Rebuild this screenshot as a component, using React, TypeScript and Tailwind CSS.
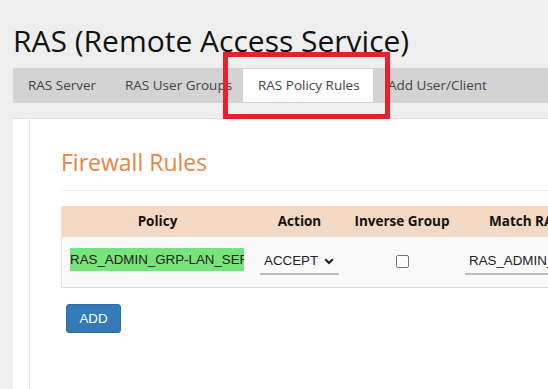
import React from "react";

const ui = { fontFamily: '"Open Sans", "Noto Sans", sans-serif' };
const inp = { fontFamily: '"Liberation Sans", Arial, sans-serif' };

export default function App() {
  return (
    <div className="relative w-[548px] h-[389px] overflow-hidden bg-[#eeeeee] text-[#222]" style={ui}>
      <div className="h-[68px] pt-[26px] pl-[13px]">
        <h1 className="text-[30px] leading-[30px] whitespace-nowrap text-[#111]">RAS (Remote Access Service)</h1>
      </div>
      <div className="ml-[13px] h-[35px] bg-[#d3d3d3] flex pt-[1px] text-[13.5px] text-[#444] whitespace-nowrap">
        <div className="w-[97px] h-[33px] pl-[15px] flex items-center shrink-0">RAS Server</div>
        <div className="w-[133px] h-[33px] pl-[15px] flex items-center shrink-0">RAS User Groups</div>
        <div className="w-[130px] h-[33px] pl-[15px] flex items-center bg-white shrink-0">RAS Policy Rules</div>
        <div className="h-[33px] pl-[15px] flex items-center shrink-0">Add User/Client</div>
      </div>
      <div className="mt-[15px] ml-[13px] h-[300px] bg-white border-t border-[#e2e2e2] flex">
        <div className="w-[16px] shrink-0" />
        <div className="flex-1 min-w-0 border-l border-[#e6e6e6] pl-[31px] pt-[31px]">
          <h2 className="text-[23px] leading-[24px] text-[#e8843f] whitespace-nowrap">Firewall Rules</h2>
          <div className="mt-[16px] ml-[1px] h-px bg-[#eeeeee]" />
          <div className="mt-[15px] w-[640px] border-l border-[#e3e3e3]">
            <div className="flex h-[31px] bg-[#f3d9c4] text-[13.5px] font-bold text-[#111] items-center whitespace-nowrap">
              <div className="w-[191px] shrink-0 text-center">Policy</div>
              <div className="w-[93px] shrink-0 text-center">Action</div>
              <div className="w-[112px] shrink-0 text-center">Inverse Group</div>
              <div className="pl-[31px] shrink-0">Match RAS Group</div>
            </div>
            <div className="flex h-[51px] bg-[#f9f9f9] border-b border-[#dddddd] text-[13.333px] text-[#222]" style={inp}>
              <div className="w-[191px] shrink-0 pl-[8px] pt-[11px]">
                <div className="w-[174px] h-[23px] bg-[#77e37a] overflow-hidden whitespace-nowrap leading-[23px]">RAS_ADMIN_GRP-LAN_SERVERS</div>
              </div>
              <div className="w-[93px] shrink-0 pl-[7px] pt-[12px]">
                <div className="w-[79px] h-[26px] border-b-2 border-[#bbbbbb] flex items-center pl-[4px] pr-[5px]">
                  <span className="flex-1">ACCEPT</span>
                  <svg width="10" height="7" viewBox="0 0 10 7" className="shrink-0">
                    <path d="M1.2 1.3 L5 5 L8.8 1.3" fill="none" stroke="#222" strokeWidth="2.2" />
                  </svg>
                </div>
              </div>
              <div className="w-[112px] shrink-0 flex justify-center pt-[18px]">
                <div className="w-[13px] h-[13px] border border-[#767676] rounded-[2px] bg-white" />
              </div>
              <div className="pl-[7px] pt-[12px] shrink-0">
                <div className="w-[200px] h-[26px] border-b-2 border-[#bbbbbb] flex items-center pl-[4px] whitespace-nowrap">RAS_ADMIN_GRP</div>
              </div>
            </div>
          </div>
          <button className="mt-[16px] ml-[5px] w-[55px] h-[29px] bg-[#337ab7] border border-[#2e6da4] rounded-[3px] text-white text-[13.333px]" style={inp}>ADD</button>
        </div>
      </div>
      <div className="absolute left-[223px] top-[52px] w-[167px] h-[67px] border-[5px] border-[#e8202a]" />
    </div>
  );
}
